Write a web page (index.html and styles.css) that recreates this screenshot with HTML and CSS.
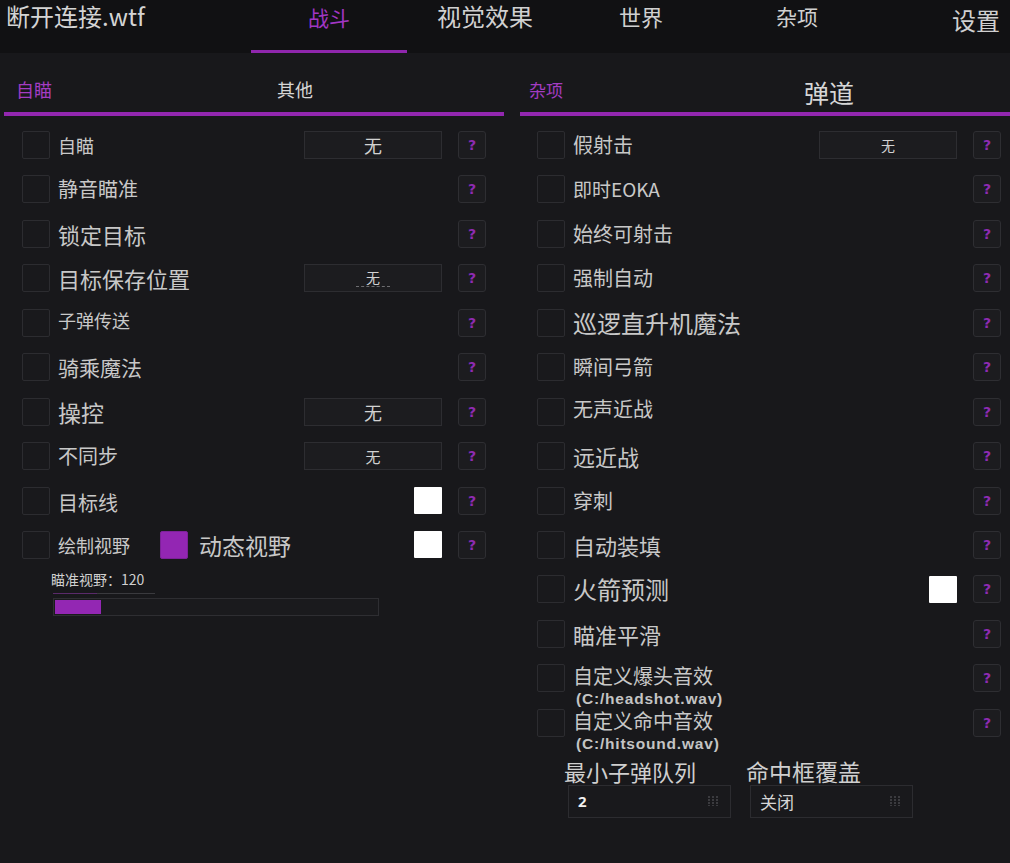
FILE: index.html
```html
<!DOCTYPE html>
<html lang="zh-CN">
<head>
<meta charset="utf-8">
<title>断开连接.wtf</title>
<link rel="stylesheet" href="styles.css">
</head>
<body>
<header class="topbar">
  <div class="brand">断开连接.wtf</div>
  <nav class="tabs">
    <span class="tab tab-active fs21">战斗</span>
    <span class="tab fs24">视觉效果</span>
    <span class="tab fs22">世界</span>
    <span class="tab fs21">杂项</span>
    <span class="tab tab-last fs24">设置</span>
  </nav>
</header>

<main class="panels">
  <!-- left panel: aim settings -->
  <section class="panel panel-left">
    <div class="subtabs">
      <span class="subtab subtab-active fs18">自瞄</span>
      <span class="subtab subtab-second-left fs18">其他</span>
    </div>
    <div class="rows">
      <div class="row">
        <span class="check"></span><span class="label fs18">自瞄</span>
        <span class="select fs18">无</span><span class="help">?</span>
      </div>
      <div class="row">
        <span class="check"></span><span class="label fs20">静音瞄准</span>
        <span class="help">?</span>
      </div>
      <div class="row">
        <span class="check"></span><span class="label fs22">锁定目标</span>
        <span class="help">?</span>
      </div>
      <div class="row">
        <span class="check"></span><span class="label fs22">目标保存位置</span>
        <span class="select fs14"><span class="dotted">无</span></span><span class="help">?</span>
      </div>
      <div class="row">
        <span class="check"></span><span class="label label-high fs18">子弹传送</span>
        <span class="help">?</span>
      </div>
      <div class="row">
        <span class="check"></span><span class="label fs21">骑乘魔法</span>
        <span class="help">?</span>
      </div>
      <div class="row">
        <span class="check"></span><span class="label fs23">操控</span>
        <span class="select fs18">无</span><span class="help">?</span>
      </div>
      <div class="row">
        <span class="check"></span><span class="label fs20">不同步</span>
        <span class="select fs15">无</span><span class="help">?</span>
      </div>
      <div class="row">
        <span class="check"></span><span class="label label-low fs20">目标线</span>
        <span class="swatch"></span><span class="help">?</span>
      </div>
      <div class="row">
        <span class="check"></span><span class="label label-grow-off fs18">绘制视野</span>
        <span class="check check-on"></span><span class="label label-mid fs23">动态视野</span>
        <span class="swatch"></span><span class="help">?</span>
      </div>
    </div>
    <div class="slider">
      <div class="slider-label">瞄准视野：120</div>
      <div class="slider-rule"><span class="slider-rule-fill"></span></div>
      <div class="slider-track"><span class="slider-fill" style="width: 46px"></span></div>
    </div>
  </section>

  <!-- right panel: ballistics -->
  <section class="panel panel-right">
    <div class="subtabs">
      <span class="subtab subtab-active fs17">杂项</span>
      <span class="subtab subtab-second-right fs25">弹道</span>
    </div>
    <div class="rows">
      <div class="row">
        <span class="check"></span><span class="label fs20">假射击</span>
        <span class="select fs14">无</span><span class="help">?</span>
      </div>
      <div class="row">
        <span class="check"></span><span class="label fs19">即时EOKA</span>
        <span class="help">?</span>
      </div>
      <div class="row">
        <span class="check"></span><span class="label fs20">始终可射击</span>
        <span class="help">?</span>
      </div>
      <div class="row">
        <span class="check"></span><span class="label fs20">强制自动</span>
        <span class="help">?</span>
      </div>
      <div class="row">
        <span class="check"></span><span class="label fs24">巡逻直升机魔法</span>
        <span class="help">?</span>
      </div>
      <div class="row">
        <span class="check"></span><span class="label fs20">瞬间弓箭</span>
        <span class="help">?</span>
      </div>
      <div class="row">
        <span class="check"></span><span class="label label-high fs20">无声近战</span>
        <span class="help">?</span>
      </div>
      <div class="row">
        <span class="check"></span><span class="label fs22">远近战</span>
        <span class="help">?</span>
      </div>
      <div class="row">
        <span class="check"></span><span class="label fs20">穿刺</span>
        <span class="help">?</span>
      </div>
      <div class="row">
        <span class="check"></span><span class="label fs22">自动装填</span>
        <span class="help">?</span>
      </div>
      <div class="row">
        <span class="check"></span><span class="label fs24">火箭预测</span>
        <span class="swatch"></span><span class="help">?</span>
      </div>
      <div class="row">
        <span class="check"></span><span class="label fs22">瞄准平滑</span>
        <span class="help">?</span>
      </div>
      <div class="row row-file">
        <span class="check"></span>
        <span class="label label-stack">
          <span class="file-name fs20">自定义爆头音效</span>
          <span class="file">(C:/headshot.wav)</span>
        </span>
        <span class="help">?</span>
      </div>
      <div class="row row-file">
        <span class="check"></span>
        <span class="label label-stack">
          <span class="file-name fs20">自定义命中音效</span>
          <span class="file">(C:/hitsound.wav)</span>
        </span>
        <span class="help">?</span>
      </div>
    </div>
    <div class="fields">
      <div class="field">
        <div class="field-label fs22">最小子弹队列</div>
        <div class="input"><span class="input-value input-number">2</span>
          <svg class="grip" viewBox="0 0 12 10" width="12" height="10"><path d="M1 0v10M5 0v10M9 0v10" stroke="#3b3b3f" stroke-width="2" stroke-dasharray="2 1"/></svg>
        </div>
      </div>
      <div class="field field-second">
        <div class="field-label fs23">命中框覆盖</div>
        <div class="input"><span class="input-value fs17">关闭</span>
          <svg class="grip" viewBox="0 0 12 10" width="12" height="10"><path d="M1 0v10M5 0v10M9 0v10" stroke="#3b3b3f" stroke-width="2" stroke-dasharray="2 1"/></svg>
        </div>
      </div>
    </div>
  </section>
</main>
</body>
</html>
```

FILE: styles.css
```css
* { box-sizing: border-box; }

html, body {
  margin: 0;
  padding: 0;
  width: 1010px;
  height: 863px;
  overflow: hidden;
}

body {
  background: #18181b;
  color: #c7c7c7;
  font-family: "Noto Sans CJK SC", "Noto Sans", sans-serif;
}

/* font size helpers */
.fs14 { font-size: 14px; }
.fs15 { font-size: 15px; }
.fs17 { font-size: 17px; }
.fs18 { font-size: 18px; }
.fs19 { font-size: 19px; }
.fs20 { font-size: 20px; }
.fs21 { font-size: 21px; }
.fs22 { font-size: 22px; }
.fs23 { font-size: 23px; }
.fs24 { font-size: 24px; }
.fs25 { font-size: 25px; }

/* ---------- top navigation ---------- */
.topbar {
  height: 53px;
  background: #111113;
  display: flex;
  align-items: stretch;
}

.brand {
  flex: none;
  width: 251px;
  padding: 1px 0 0 6px;
  font-size: 24px;
  line-height: 30px;
  color: #d4d4d4;
}

.tabs {
  flex: 1;
  display: flex;
  min-width: 0;
}

.tab {
  flex: none;
  width: 156px;
  text-align: center;
  line-height: 32px;
  color: #d0d0d0;
  border-bottom: 3px solid transparent;
}

.tab-active {
  color: #a236c4;
  border-bottom-color: #8f26ad;
  padding-top: 1px;
}

.tab-last {
  flex: 1 1 0;
  width: auto;
  text-align: right;
  padding-right: 10px;
  padding-top: 4px;
}

/* ---------- panels ---------- */
.panels {
  display: grid;
  grid-template-columns: 500px 490px;
  column-gap: 16px;
  padding-left: 4px;
}

.subtabs {
  height: 63px;
  padding-top: 15px;
  display: flex;
  align-items: center;
  border-bottom: 4px solid #9327b0;
  line-height: 1.2;
}

.panel-left .subtabs { padding-left: 12px; }
.panel-right .subtabs { padding-left: 9px; }

.subtab-active { color: #a33cc2; }
.subtab-second-left { margin-left: 225px; color: #d6d6d6; }
.subtab-second-right { margin-left: 241px; color: #d6d6d6; margin-top: 3px; }

.rows {
  display: flex;
  flex-direction: column;
  gap: 16.45px;
  padding-top: 15px;
}

.row {
  height: 28px;
  display: flex;
  align-items: center;
  gap: 8px;
}

.panel-left .row { padding: 0 18px; }
.panel-right .row { padding: 0 9px 0 17px; }

.check {
  flex: none;
  width: 28px;
  height: 28px;
  background: #19191c;
  border: 1px solid #2c2c30;
  border-radius: 2px;
}

.check-on {
  background: #9326b3;
  border-color: #7d2199;
  margin-left: 22px;
}

.label {
  flex: 1;
  white-space: nowrap;
  line-height: 28px;
  color: #c8c8c8;
}

.label-high { margin-top: -6px; }
.label-low { margin-top: 4px; }
.label-grow-off { flex: none; }
.label-mid { margin-left: 3px; }

.select {
  flex: none;
  width: 138px;
  height: 28px;
  margin-right: 8px;
  background: #1c1c1f;
  border: 1px solid #2d2d31;
  display: flex;
  align-items: center;
  justify-content: center;
  color: #d2d2d2;
  line-height: 1;
}

.dotted {
  padding: 0 10px 2px;
  border-bottom: 1px dashed #6d6d70;
}

.swatch {
  flex: none;
  width: 28px;
  height: 27px;
  margin-right: 8px;
  background: #ffffff;
  border-radius: 1px;
}

.help {
  flex: none;
  width: 28px;
  height: 28px;
  background: #1c1c1f;
  border: 1px solid #2e2e32;
  border-radius: 3px;
  display: flex;
  align-items: center;
  justify-content: center;
  font-family: "DejaVu Sans", sans-serif;
  font-weight: bold;
  font-size: 14px;
  color: #8e2bb2;
}

/* file path rows: name on the checkbox line, path tucked under it */
.row-file { align-items: flex-start; }

.label-stack {
  display: flex;
  flex-direction: column;
}

.file-name {
  line-height: 24px;
}

.file {
  font-family: "Liberation Sans", "Open Sans", sans-serif;
  font-weight: 700;
  font-size: 15.5px;
  line-height: 17px;
  letter-spacing: 0.8px;
  margin-top: 2px;
  padding-left: 3px;
  color: #c4c4c4;
}

/* ---------- slider ---------- */
.slider {
  padding: 12px 0 0 47px;
}

.slider-label {
  font-size: 14px;
  line-height: 16px;
  color: #d0d0d0;
}

.slider-rule {
  width: 102px;
  height: 1px;
  margin: 6px 0 0 2px;
  background: #3a3a3e;
}

.slider-rule-fill {
  display: block;
  width: 44px;
  height: 1px;
  background: #5a2a6a;
}

.slider-track {
  width: 326px;
  height: 18px;
  margin: 4px 0 0 2px;
  padding: 1px;
  background: #1a1a1d;
  border: 1px solid #2e2e32;
}

.slider-fill {
  display: block;
  height: 100%;
  background: #9327b3;
}

/* ---------- numeric fields ---------- */
.fields {
  display: flex;
  padding: 20px 0 0 44px;
}

.field { width: 182px; }

.field-label {
  line-height: 28px;
  color: #cfcfcf;
}

.input {
  width: 163px;
  height: 33px;
  margin: 0 0 0 4px;
  background: #19191c;
  border: 1px solid #2c2c30;
  display: flex;
  align-items: center;
  justify-content: space-between;
  padding: 0 10px 0 9px;
}

.input-value { color: #d6d6d6; line-height: 1; }

.input-number {
  font-family: "Open Sans", sans-serif;
  font-weight: 700;
  font-size: 15px;
  color: #f0f0f0;
}

.grip { flex: none; }
```
